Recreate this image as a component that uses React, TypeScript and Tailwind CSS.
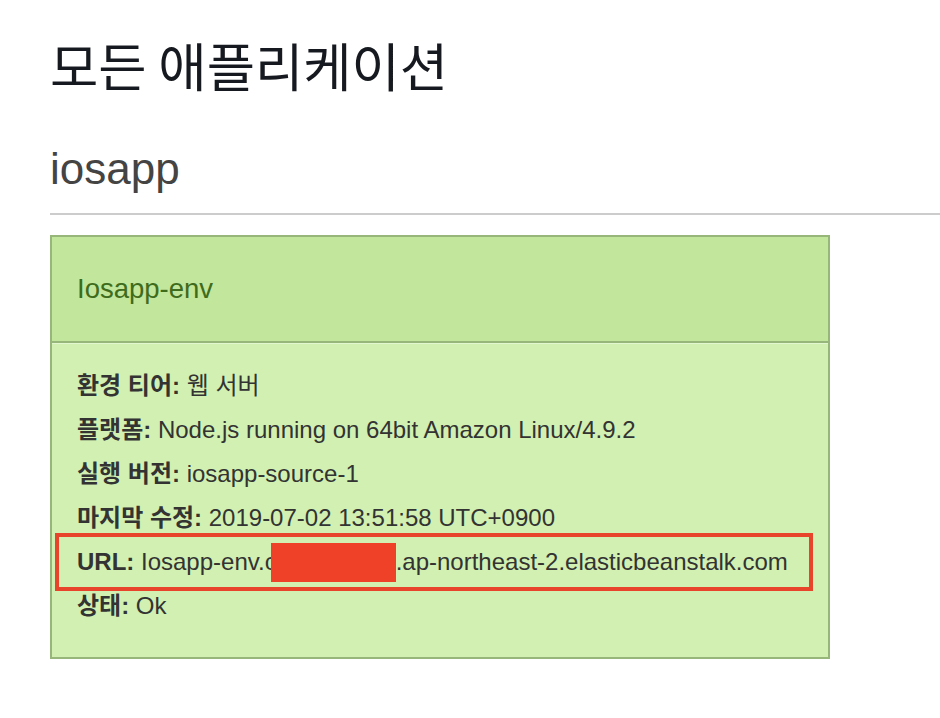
import React from "react";

const rows: { label: string; value: React.ReactNode; highlight?: boolean }[] = [
  { label: "환경 티어:", value: "웹 서버" },
  { label: "플랫폼:", value: "Node.js running on 64bit Amazon Linux/4.9.2" },
  { label: "실행 버전:", value: "iosapp-source-1" },
  { label: "마지막 수정:", value: "2019-07-02 13:51:58 UTC+0900" },
  {
    label: "URL:",
    highlight: true,
    value: (
      <>
        Iosapp-env.
        <span className="relative inline-block w-[131px]">
          c
          <span className="absolute left-[6px] top-[3px] h-[39px] w-[125px] bg-[#ee4128]" />
        </span>
        .ap-northeast-2.elasticbeanstalk.com
      </>
    ),
  },
  { label: "상태:", value: "Ok" },
];

const EnvCard: React.FC = () => {
  return (
    <div className="w-[780px] border-2 border-[#97b67a] bg-[#d1f0b1]">
      <div className="flex h-[104px] items-center bg-[#c2e69b] pl-[25px]">
        <span className="text-[27.5px] text-[#3f6b1d] font-['Liberation_Sans',sans-serif]">
          Iosapp-env
        </span>
      </div>
      <div className="border-t-2 border-[#97b67a]">
        <div className="border-t border-[#e2f6cf] pl-[25px] pt-[20px] pb-[29px]">
          {rows.map((r) => (
            <div
              key={r.label}
              className="relative h-[44px] leading-[44px] text-[24px] text-[#333] whitespace-nowrap font-['Liberation_Sans','Noto_Sans_CJK_KR',sans-serif]"
            >
              <strong className="font-bold">{r.label}</strong> {r.value}
              {r.highlight && (
                <span className="absolute left-[-22px] top-[-7px] h-[58px] w-[758px] border-4 border-[#e8432b]" />
              )}
            </div>
          ))}
        </div>
      </div>
    </div>
  );
}

export default function App() {
  return (
    <div className="min-h-[718px] w-[940px] bg-white pl-[50px] pt-[38px]">
      <h1 className="text-[52.5px] leading-none text-[#16191f] font-['Noto_Sans_CJK_KR',sans-serif]">
        모든 애플리케이션
      </h1>
      <h2 className="mt-[56px] text-[44px] leading-none text-[#444] font-['Liberation_Sans',sans-serif]">
        iosapp
      </h2>
      <div className="mt-[22px] h-[2px] bg-[#cccccc]" />
      <div className="mt-[20px]">
        <EnvCard />
      </div>
    </div>
  );
}
